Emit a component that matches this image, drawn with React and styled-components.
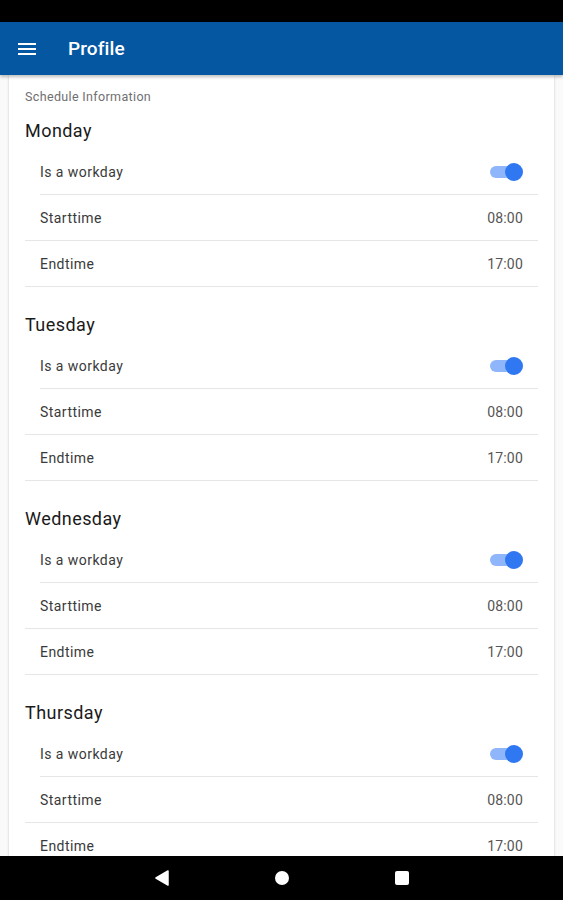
import React from "react";
import styled, { createGlobalStyle } from "styled-components";

const Global = createGlobalStyle`
  html, body { margin: 0; padding: 0; background: #000; }
  body { font-family: Roboto, "Noto Sans", "Liberation Sans", sans-serif; -webkit-font-smoothing: antialiased; }
  * { box-sizing: border-box; }
`;

const Screen = styled.div`
  width: 563px;
  height: 900px;
  display: flex;
  flex-direction: column;
  background: #fafafa;
  overflow: hidden;
`;

const StatusBar = styled.div`
  height: 22px;
  flex: none;
  background: #000;
`;

const AppBar = styled.header`
  height: 53px;
  flex: none;
  display: flex;
  align-items: center;
  gap: 29px;
  padding-left: 15px;
  background: #0557a1;
  color: #fff;
  box-shadow: 0 2px 3px rgba(0, 0, 0, 0.25);
  position: relative;
  z-index: 2;
`;

const Title = styled.h1`
  margin: 0;
  font-size: 19px;
  font-weight: 500;
  letter-spacing: 0.1px;
`;

const Content = styled.main`
  flex: 1;
  min-height: 0;
  overflow: hidden;
  padding: 0 9px;
`;

const Card = styled.section`
  background: #fff;
  padding: 14px 16px 0;
  min-height: 100%;
  box-shadow: 0 0 2px rgba(0, 0, 0, 0.14), 0 1px 3px rgba(0, 0, 0, 0.08);
`;

const Caption = styled.div`
  font-size: 12.5px;
  line-height: 16px;
  letter-spacing: 0.35px;
  color: #6f6f6f;
  margin-bottom: 14px;
`;

const Day = styled.div`
  padding-bottom: 26px;
`;

const DayTitle = styled.h2`
  margin: 0 0 6px;
  font-size: 18px;
  line-height: 24px;
  font-weight: 400;
  letter-spacing: 0.45px;
  color: #1a1a1a;
`;

const Row = styled.div`
  height: 46px;
  display: flex;
  align-items: center;
  justify-content: space-between;
  border-bottom: 1px solid #e6e6e6;
  padding: 0 15px 0 ${(p) => (p.$inset ? "0" : "15px")};
  margin-left: ${(p) => (p.$inset ? "15px" : "0")};
`;

const Label = styled.span`
  font-size: 14px;
  color: #3a3a3a;
  letter-spacing: 0.45px;
`;

const Value = styled.span`
  font-size: 14px;
  color: #555;
  letter-spacing: 0.2px;
`;

const Switch = styled.span`
  position: relative;
  width: 34px;
  height: 18px;
  display: inline-block;
  &::before {
    content: "";
    position: absolute;
    left: 1px;
    top: 3px;
    width: 29px;
    height: 12px;
    border-radius: 6px;
    background: #8fb6fa;
  }
  &::after {
    content: "";
    position: absolute;
    right: 0;
    top: 0;
    width: 18px;
    height: 18px;
    border-radius: 50%;
    background: #2f78f2;
  }
`;

const NavBar = styled.nav`
  height: 44px;
  flex: none;
  background: #000;
  display: flex;
  align-items: center;
  justify-content: center;
  gap: 100px;
  position: relative;
  z-index: 2;
`;

const NavBtn = styled.span`
  width: 20px;
  height: 20px;
  display: flex;
  align-items: center;
  justify-content: center;
`;

const days = ["Monday", "Tuesday", "Wednesday", "Thursday"];

export default function App() {
  return (
    <Screen>
      <Global />
      <StatusBar />
      <AppBar>
        <svg width="24" height="24" viewBox="0 0 24 24" fill="#fff">
          <path d="M3 18h18v-2H3v2zm0-5h18v-2H3v2zm0-7v2h18V6H3z" />
        </svg>
        <Title>Profile</Title>
      </AppBar>
      <Content>
        <Card>
          <Caption>Schedule Information</Caption>
          {days.map((d) => (
            <Day key={d}>
              <DayTitle>{d}</DayTitle>
              <Row $inset>
                <Label>Is a workday</Label>
                <Switch />
              </Row>
              <Row>
                <Label>Starttime</Label>
                <Value>08:00</Value>
              </Row>
              <Row>
                <Label>Endtime</Label>
                <Value>17:00</Value>
              </Row>
            </Day>
          ))}
        </Card>
      </Content>
      <NavBar>
        <NavBtn>
          <svg width="16" height="18" viewBox="0 0 16 18">
            <path d="M14 2 L2 9 L14 16 Z" fill="#fff" stroke="#fff" strokeWidth="1.5" strokeLinejoin="round" />
          </svg>
        </NavBtn>
        <NavBtn>
          <svg width="14" height="14" viewBox="0 0 14 14">
            <circle cx="7" cy="7" r="7" fill="#fff" />
          </svg>
        </NavBtn>
        <NavBtn>
          <svg width="14" height="14" viewBox="0 0 14 14">
            <rect x="0" y="0" width="14" height="14" rx="2" fill="#fff" />
          </svg>
        </NavBtn>
      </NavBar>
    </Screen>
  );
}
